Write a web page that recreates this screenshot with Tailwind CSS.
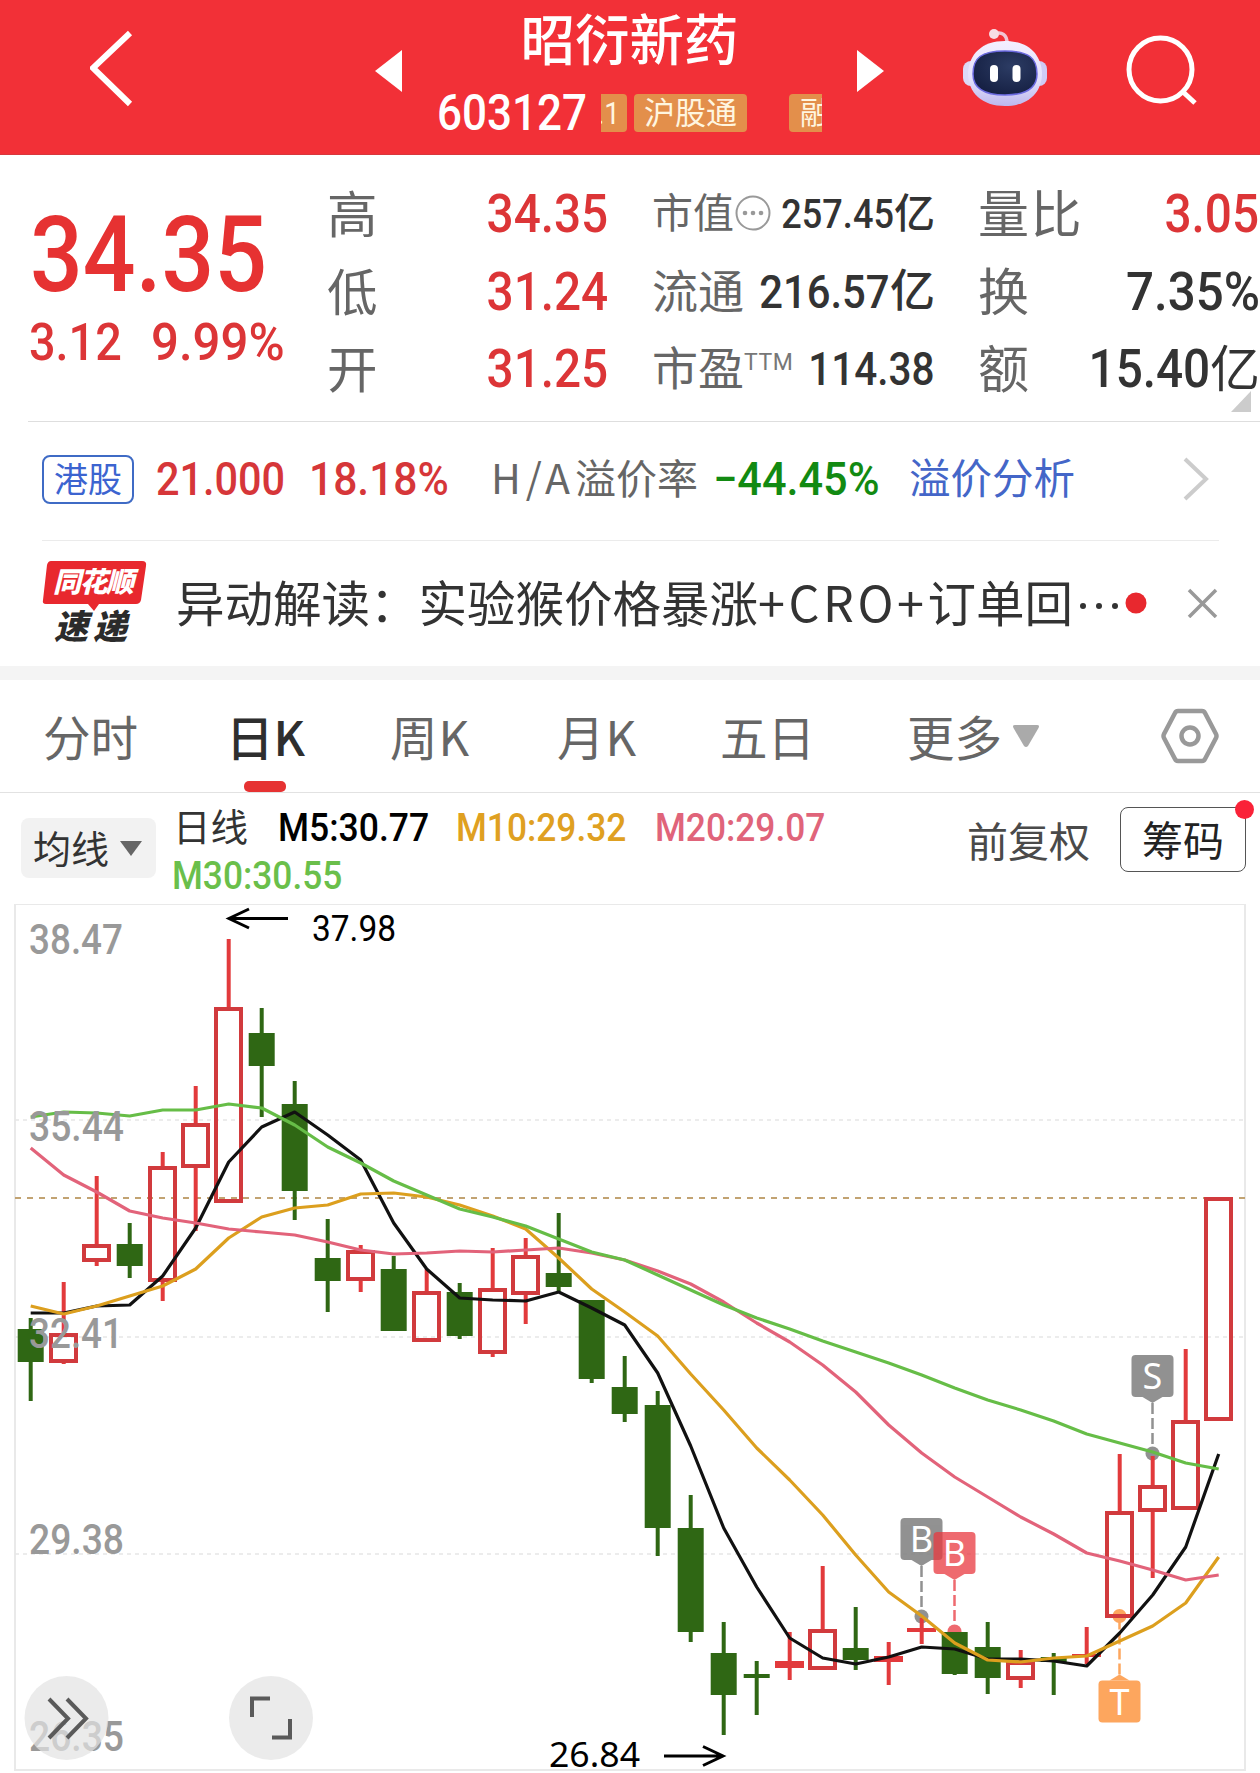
<!DOCTYPE html>
<html lang="zh-CN">
<head>
    <meta charset="UTF-8">
    <title>昭衍新药 603127</title>
    <meta name="viewport" content="width=device-width, initial-scale=1.0">
    <script src="https://cdn.jsdelivr.net/npm/@tailwindcss/browser@4"></script>
</head>
<body class="bg-white font-[Roboto,'Noto_Sans_CJK_SC',sans-serif] text-[#333]">
<div class="w-[1260px] h-[1773px] overflow-hidden">

    <!-- Header -->
    <header class="h-[155px] bg-[#f23037] flex items-start text-white border-b border-[#d8383d]">
        <svg class="w-[45px] h-[80px] ml-[90px] mt-[28px] shrink-0" viewBox="90 28 45 80" fill="none" stroke="#fff" stroke-width="6"><path d="M130 33 93 68l37 36"/></svg>
        <svg class="w-[27px] h-[42px] ml-[240px] mt-[50px] shrink-0" viewBox="0 0 27 42" fill="#fff"><path d="M27 0v42L0 21z"/></svg>
        <div class="w-[455px] shrink-0">
            <h1 class="h-[80px] leading-[83px] text-center text-[54.500px] font-medium">昭衍新药</h1>
            <div class="flex items-center h-[38px] mt-[14px] pl-[35px]">
                <span class="w-[164px] text-[50px] leading-[41px] font-medium origin-left scale-x-[.88]">603127</span>
                <div class="w-[221px] h-[38px] flex overflow-hidden text-[31px] leading-[39px] text-[#fff6e0]">
                    <span class="w-[26px] shrink-0 bg-[#e38f4b] rounded-r-[4px] overflow-hidden"><span class="inline-block -ml-[4px] scale-x-90 origin-left">.1</span></span>
                    <span class="w-[113px] shrink-0 ml-[7px] bg-[#e38f4b] rounded-[4px] text-center">沪股通</span>
                    <span class="w-[60px] shrink-0 ml-[42px] pl-[11px] bg-[#e38f4b] rounded-[4px]">融</span>
                </div>
            </div>
        </div>
        <svg class="w-[27px] h-[42px] mt-[50px] shrink-0" viewBox="0 0 27 42" fill="#fff"><path d="M0 0v42l27-21z"/></svg>
        <svg class="w-[86px] h-[82px] ml-[78px] mt-[27px] shrink-0" viewBox="962 27 86 82">
            <defs>
                <linearGradient id="shell" x1="0" y1="0" x2="0" y2="1"><stop offset="0" stop-color="#f4efff"/><stop offset=".6" stop-color="#e3e0fa"/><stop offset="1" stop-color="#bdb7ee"/></linearGradient>
                <radialGradient id="visor" cx=".6" cy=".35" r=".7"><stop offset="0" stop-color="#2c3c64"/><stop offset="1" stop-color="#151f42"/></radialGradient>
            </defs>
            <path d="M994 34c8-3 13 1 13 9" fill="none" stroke="#f1c5d4" stroke-width="3.5"/>
            <circle cx="994" cy="34" r="5" fill="#f7dce4"/>
            <rect x="963" y="61" width="16" height="25" rx="8" fill="#dcd9f7"/>
            <rect x="1031" y="61" width="16" height="25" rx="8" fill="#cfcbf5"/>
            <path d="M1005 41c23 0 36 13 37 32 0 20-14 33-37 33s-37-13-37-33c1-19 14-32 37-32z" fill="url(#shell)"/>
            <path d="M1005 51c24 0 32 7 32 23 0 14-11 21-32 21s-32-7-32-21c0-16 8-23 32-23z" fill="url(#visor)" stroke="#6b6ae0" stroke-width="1.5"/>
            <rect x="990" y="65" width="8" height="17" rx="4" fill="#fff"/>
            <rect x="1012.500" y="65" width="8" height="17" rx="4" fill="#fff"/>
        </svg>
        <svg class="w-[76px] h-[76px] ml-[76px] mt-[32px] shrink-0" viewBox="1124 32 76 76" fill="none" stroke="#fff" stroke-width="5"><circle cx="1160.500" cy="69.500" r="31.500"/><path d="m1182 91 13 12"/></svg>
    </header>

    <!-- Quote -->
    <section class="h-[266px] flex pt-[20px] relative">
        <div class="w-[327px] shrink-0 text-[#e63232] font-medium pl-[28px]">
            <div class="text-[105px] leading-[75px] mt-[43px] ml-[2px] origin-left scale-x-[.885]">34.35</div>
            <div class="flex text-[52px] leading-[37px] mt-[31px] ml-[1px] text-[#dc3537]">
                <span class="w-[122px] origin-left scale-x-[.9]">3.12</span>
                <span class="origin-left scale-x-[.945]">9.99%</span>
            </div>
        </div>
        <div class="w-[281px] shrink-0 text-[50.500px] leading-[77.500px]">
            <div class="flex justify-between"><span class="text-[#666] relative top-[2px]">高</span><span class="text-[53px] font-medium text-[#dc3537] origin-right scale-x-[.9] relative top-[1px]">34.35</span></div>
            <div class="flex justify-between"><span class="text-[#666] relative top-[2px]">低</span><span class="text-[53px] font-medium text-[#dc3537] origin-right scale-x-[.9] relative top-[1px]">31.24</span></div>
            <div class="flex justify-between"><span class="text-[#666] relative top-[2px]">开</span><span class="text-[53px] font-medium text-[#dc3537] origin-right scale-x-[.9] relative top-[1px]">31.25</span></div>
        </div>
        <div class="w-[283px] ml-[44px] shrink-0 leading-[78.500px] h-[233px] text-[46px]">
            <div class="flex h-[77.500px] items-center text-[41px]">
                <span class="text-[#666]">市值</span>
                <svg class="w-[36px] h-[36px] ml-[1px] -mt-[2px] shrink-0" viewBox="0 0 36 36" fill="#999"><circle cx="18" cy="18" r="16.500" fill="none" stroke="#999" stroke-width="2"/><circle cx="10" cy="18" r="2.300"/><circle cx="18" cy="18" r="2.300"/><circle cx="26" cy="18" r="2.300"/></svg>
                <span class="flex-1 flex justify-end w-0 font-medium"><span class="origin-right scale-x-[.88]">257.45</span><span>亿</span></span>
            </div>
            <div class="flex h-[77.500px]">
                <span class="text-[#666]">流通</span>
                <span class="flex-1 flex justify-end w-0 font-medium"><span class="origin-right scale-x-[.89] text-[47px]">216.57</span><span class="text-[45px]">亿</span></span>
            </div>
            <div class="flex h-[77.500px]">
                <span class="text-[#666]">市盈</span><span class="text-[23px] leading-[65px] text-[#777] tracking-[.5px]">TTM</span>
                <span class="flex-1 flex justify-end w-0 font-medium"><span class="origin-right scale-x-[.88]">114.38</span></span>
            </div>
        </div>
        <div class="w-[282px] ml-[43px] shrink-0 text-[51px] leading-[77.500px] font-medium">
            <div class="flex"><span class="text-[#666] font-normal tracking-[1.500px] relative top-[2px]">量比</span><span class="flex-1 flex justify-end w-0 text-[53px] text-[#dc3537]"><span class="origin-right scale-x-[.9] relative top-[1px] right-[1px]">3.05</span></span></div>
            <div class="flex"><span class="text-[#666] font-normal relative top-[2px]">换</span><span class="flex-1 flex justify-end w-0 text-[53px]"><span class="origin-right scale-x-[.93] relative top-[1px]">7.35%</span></span></div>
            <div class="flex"><span class="text-[#666] font-normal relative top-[2px]">额</span><span class="flex-1 flex justify-end w-0 text-[53px]"><span class="origin-right scale-x-[.9] relative top-[1px]">15.40</span><span class="text-[50px] font-normal relative top-[2px]">亿</span></span></div>
        </div>
        <svg class="absolute left-[1231px] top-[236px] w-[20px] h-[21px]" viewBox="0 0 20 21" fill="#ccc"><path d="M20 0v21H0z"/></svg>
    </section>

    <!-- H share -->
    <section class="h-[119px] ml-[28px] pl-[14px] border-t-[1.500px] border-[#dedede] flex items-center pb-[4px] text-[41px]">
        <span class="w-[92px] h-[49px] border-2 border-[#3f6bc5] rounded-[8px] text-[34px] leading-[46px] text-center text-[#3c64d0]">港股</span>
        <span class="w-[153px] ml-[22px] text-[46px] font-medium text-[#d63639] origin-left scale-x-[.9]">21.000</span>
        <span class="w-[182px] text-[46px] font-medium text-[#d63639] origin-left scale-x-[.925]">18.18%</span>
        <span class="w-[222px] text-[#666] whitespace-nowrap font-['Noto_Sans_CJK_SC'] leading-[40px] -mt-[6px]"><span class="tracking-[5px]">H/A</span>溢价率</span>
        <span class="w-[196px] text-[46px] font-medium text-[#128a12] whitespace-nowrap origin-left scale-x-[.94]">−44.45%</span>
        <span class="text-[41.500px] leading-[48px] pt-[2px] text-[#4466c8]">溢价分析</span>
        <svg class="w-[30px] h-[44px] ml-[107px]" viewBox="0 0 30 44" fill="none" stroke="#ccc" stroke-width="4"><path d="m3 2 21 20L3 42"/></svg>
    </section>

    <!-- News -->
    <section class="h-[126px] ml-[42px] mr-[41px] border-t border-[#ebebeb] flex">
        <div class="w-[106px] h-[90px] mt-[19px] relative shrink-0 italic font-black leading-none">
            <svg class="absolute inset-0 w-[106px] h-[54px]" viewBox="0 0 106 54" fill="#e8282e"><path d="M9 1h91q5 0 4 5l-5 34q-1 4-5 4H57l-5 7-6-7H4q-4 0-3-4L5 5q1-4 4-4z"/></svg>
            <div class="relative pl-[11px] h-[46px] leading-[46px] text-[28px] tracking-[-1.500px] text-white">同花顺</div>
            <div class="relative pl-[12px] leading-[43px] text-[34px] tracking-[5px] text-[#2b2b2b] whitespace-nowrap">速递</div>
        </div>
        <div class="flex-1 w-0 ml-[28px] flex items-center pb-[2px]">
            <p class="whitespace-nowrap text-[48.500px] leading-[60px] -mt-[3px] font-['Noto_Sans_CJK_SC']">异动解读：实验猴价格暴涨<span class="tracking-[3.600px]">+CRO+</span>订单回</p>
            <svg class="w-[152px] h-[30px] shrink-0" viewBox="0 0 152 30" fill="#333"><circle cx="10" cy="18" r="3"/><circle cx="26" cy="18" r="3"/><circle cx="42" cy="18" r="3"/><circle cx="63" cy="15" r="10.500" fill="#e8282e"/><path d="m116 2 27 27m0-27-27 27" stroke="#999" stroke-width="3.500"/></svg>
        </div>
    </section>

    <div class="h-[14px] bg-[#f4f4f4]"></div>

    <!-- Period tabs -->
    <nav class="h-[113px] border-b-[1.500px] border-[#e2e2e2] flex text-[47.500px] leading-[111px] text-[#666] font-['Noto_Sans_CJK_SC'] whitespace-nowrap">
        <span class="w-[183px] pl-[43px]">分时</span>
        <span class="w-[207px] pl-[43px] text-[#2e2e2e] font-medium relative">日K<i class="absolute left-[61px] bottom-0 w-[42px] h-[11px] rounded-[5px] bg-[#e63232]"></i></span>
        <span class="w-[167px] tracking-[1px]">周K</span>
        <span class="w-[163px] tracking-[1px]">月K</span>
        <span class="w-[187px]">五日</span>
        <span>更多</span>
        <svg class="w-[26px] h-[22px] mt-[45px] ml-[11px]" viewBox="0 0 26 22" fill="#aaa"><path d="M2 0h22q3 0 1.500 3L15 21q-2 2-4 0L.5 3Q-1 0 2 0z"/></svg>
        <svg class="w-[58px] h-[56px] mt-[28px] ml-[122px]" viewBox="0 0 58 56" fill="none" stroke="#999" stroke-width="4.500"><path d="M17 3h24q2 0 3 2l11 21q1 2 0 4L44 51q-1 2-3 2H17q-2 0-3-2L3 30q-1-2 0-4L14 5q1-2 3-2z"/><circle cx="29" cy="28" r="8.500"/></svg>
    </nav>

    <!-- Averages -->
    <section class="h-[111px] flex pl-[21px]">
        <div class="w-[135px] h-[60px] mt-[25px] rounded-[8px] bg-[#f2f2f2] flex items-center pl-[12px] text-[38px] leading-[60px]"><span class="pt-[4px]">均线</span><svg class="w-[22px] h-[15px] ml-[11px]" viewBox="0 0 22 15" fill="#666"><path d="M0 0h22L11 15z"/></svg></div>
        <div class="w-[800px] ml-[17px] pt-[11px] font-medium text-[39px] leading-[48px]">
            <div class="flex h-[48px]">
                <span class="w-[105px] text-[37.500px] font-normal leading-[49px]">日线</span>
                <span class="w-[178px] text-black origin-left scale-x-[.91]">M5:30.77</span>
                <span class="w-[199px] text-[#dfa021] origin-left scale-x-[.905]">M10:29.32</span>
                <span class="text-[#e0647a] origin-left scale-x-[.905]">M20:29.07</span>
            </div>
            <span class="inline-block -ml-px text-[#6abf4b] origin-left scale-x-[.905]">M30:30.55</span>
        </div>
        <span class="ml-[-6px] w-[153px] mt-[20px] text-[41px] leading-[61px] text-[#4a4a4a]">前复权</span>
        <div class="relative w-[126px] h-[65px] mt-[14px] border-[1.500px] border-[#555] rounded-[8px] text-[41px] leading-[69px] text-center text-[#222]">筹码<i class="absolute -right-[9px] -top-[8px] w-[19px] h-[19px] rounded-full bg-[#fa2238]"></i></div>
    </section>

    <!-- Candles -->
    <svg id="chart" class="block w-[1260px] h-[869px]" viewBox="0 904 1260 869">
        <rect x="15" y="904" width="1230" height="866" fill="none" stroke="#e9e9e9" stroke-width="2"/>
        <path d="M15 1120H1245M15 1337H1245M15 1554H1245" stroke="#e6e6e6" stroke-width="1.500" stroke-dasharray="4 4"/>
        <path d="M15 1198H1245" stroke="#c2a372" stroke-width="1.800" stroke-dasharray="6 6"/>
        <g id="marks"></g>
        <g id="candles"></g>
        <g id="lines" fill="none" stroke-width="3.200" stroke-linejoin="round"></g>
        <g font-family="Roboto" font-weight="500" font-size="42" fill="#999">
            <text x="29" y="954" textLength="94" lengthAdjust="spacingAndGlyphs">38.47</text>
            <text x="29" y="1141" textLength="95" lengthAdjust="spacingAndGlyphs">35.44</text>
            <text x="29" y="1348" textLength="94" lengthAdjust="spacingAndGlyphs">32.41</text>
            <text x="29" y="1554" textLength="95" lengthAdjust="spacingAndGlyphs">29.38</text>
            <text x="29" y="1751" textLength="95" lengthAdjust="spacingAndGlyphs">26.35</text>
        </g>
        <g fill="#000">
            <text x="312" y="941" font-family="Roboto" font-size="37" textLength="84" lengthAdjust="spacingAndGlyphs">37.98</text>
            <text x="549" y="1767" font-family="Noto Sans" font-size="35" textLength="91" lengthAdjust="spacingAndGlyphs">26.84</text>
        </g>
        <path d="M288 918.500h-58m19-9.500-20 9.500 20 9.500M664 1756h58m-19-9.500 20 9.500-20 9.500" fill="none" stroke="#000" stroke-width="3"/>
        <circle cx="66.500" cy="1718" r="42" fill="#e2e2e2" fill-opacity=".7"/>
        <circle cx="271" cy="1718" r="42" fill="#e2e2e2" fill-opacity=".7"/>
        <path d="m49 1699 19 19.500L49 1738m18-39 19 19.500L67 1738M252 1717v-18.500h18M290 1719v18.500h-18" fill="none" stroke="#5a5a5a" stroke-width="4"/>
    </svg>
</div>

<script>
    // [type, high, top, bottom, low]; g = down, r = up (hollow), s = up (thin, filled)
    var candles = [
        ['g',1318,1329,1362,1401], ['r',1282,1333,1363,1364], ['r',1176,1244,1262,1266], ['g',1223,1244,1266,1278],
        ['r',1152,1166,1282,1301], ['r',1086,1123,1168,1231], ['r',939,1007,1203,1203], ['g',1008,1033,1066,1117],
        ['g',1081,1104,1191,1220], ['g',1219,1258,1281,1312], ['r',1245,1250,1281,1292], ['g',1256,1269,1331,1331],
        ['r',1269,1291,1342,1342], ['g',1283,1292,1336,1339], ['r',1248,1288,1354,1357], ['r',1238,1255,1295,1324],
        ['g',1213,1273,1287,1291], ['g',1300,1300,1379,1383], ['g',1356,1387,1414,1422], ['g',1391,1405,1528,1556],
        ['g',1495,1528,1632,1642], ['g',1622,1653,1695,1735], ['g',1661,1674,1678,1715], ['s',1632,1661,1668,1680],
        ['r',1566,1629,1670,1670], ['g',1607,1648,1660,1670], ['s',1642,1656,1662,1685], ['s',1618,1628,1632,1644],
        ['g',1632,1632,1674,1675], ['g',1622,1647,1678,1694], ['r',1650,1661,1680,1688], ['g',1653,1657,1662,1695],
        ['s',1627,1654,1657,1664], ['r',1454,1511,1618,1618], ['r',1456,1485,1512,1578], ['r',1349,1420,1510,1510],
        ['r',1197,1197,1421,1421]
    ];
    var lines = {
        '#111': [1313,1313,1306,1305,1276,1228,1162,1127,1112,1135,1160,1223,1269,1298,1300,1301,1292,1308,1325,1373,1446,1528,1587,1638,1658,1664,1657,1647,1649,1659,1659,1661,1666,1633,1595,1547,1454],
        '#dc9f1e': [1306,1314,1306,1296,1286,1269,1238,1217,1208,1205,1194,1193,1197,1205,1216,1229,1258,1289,1312,1336,1374,1410,1448,1480,1515,1555,1592,1616,1643,1660,1662,1658,1656,1641,1626,1603,1557],
        '#e2637a': [1148,1175,1192,1211,1218,1223,1229,1232,1235,1242,1250,1254,1253,1251,1252,1250,1248,1253,1260,1271,1284,1302,1323,1342,1365,1392,1425,1453,1477,1497,1517,1534,1553,1561,1570,1580,1575],
        '#66bd47': [1117,1112,1113,1116,1110,1110,1104,1108,1125,1147,1163,1181,1195,1209,1217,1226,1239,1252,1260,1275,1290,1305,1318,1329,1341,1352,1363,1375,1388,1400,1410,1421,1434,1443,1452,1463,1469]
    };
    // x, box top, label, color, anchor y, opacity, pointing up
    var marks = [
        [921.5,1518,'B','#868686',1616.5,.9], [954.5,1532,'B','#e9393f',1631.5,.75],
        [1152.5,1355,'S','#868686',1453.5,.9], [1119.5,1680.5,'T','#fd9a48',1616,.88,true]
    ];

    function x(i) { return 30.7 + 33 * i; }

    document.getElementById('candles').innerHTML = candles.map(function (c, i) {
        var cx = x(i), t = c[0], up = t !== 'g', col = up ? '#e23a3c' : '#2f6714';
        var out = '';
        if (c[2] > c[1]) out += `<path d="M${cx} ${c[1]}V${c[2]}" stroke="${col}" stroke-width="4"/>`;
        if (c[4] > c[3]) out += `<path d="M${cx} ${c[3]}V${c[4]}" stroke="${col}" stroke-width="4"/>`;
        if (t === 'r') out += `<rect x="${cx - 12.7}" y="${c[2] + 2}" width="25" height="${c[3] - c[2] - 4}" fill="none" stroke="#d13a3d" stroke-width="4"/>`;
        else out += `<rect x="${cx - (up ? 14.7 : 13)}" y="${c[2]}" width="${up ? 29 : 26}" height="${c[3] - c[2]}" fill="${col}"/>`;
        return out;
    }).join('');

    document.getElementById('lines').innerHTML = Object.keys(lines).map(function (col) {
        return `<polyline stroke="${col}" points="${lines[col].map(function (y, i) { return x(i) + ',' + y; }).join(' ')}"/>`;
    }).join('');

    document.getElementById('marks').innerHTML = marks.map(function (m) {
        var cx = m[0], y = m[1], up = m[6];
        var tip = up ? `M${cx - 10} ${y}l10-6 10 6z` : `M${cx - 10} ${y + 42}l10 6 10-6z`;
        var from = up ? y - 6 : y + 48;
        return `<g opacity="${m[5]}"><rect x="${cx - 21}" y="${y}" width="42" height="42" rx="4" fill="${m[3]}"/><path d="${tip}" fill="${m[3]}"/>
            <path d="M${cx} ${from}V${m[4]}" stroke="${m[3]}" stroke-width="2.5" stroke-dasharray="11 4"/><circle cx="${cx}" cy="${m[4]}" r="7" fill="${m[3]}"/></g>
            <text x="${cx}" y="${y + 34}" text-anchor="middle" font-family="Noto Sans" font-size="36" fill="#fff">${m[2]}</text>`;
    }).join('');
</script>
</body>
</html>
